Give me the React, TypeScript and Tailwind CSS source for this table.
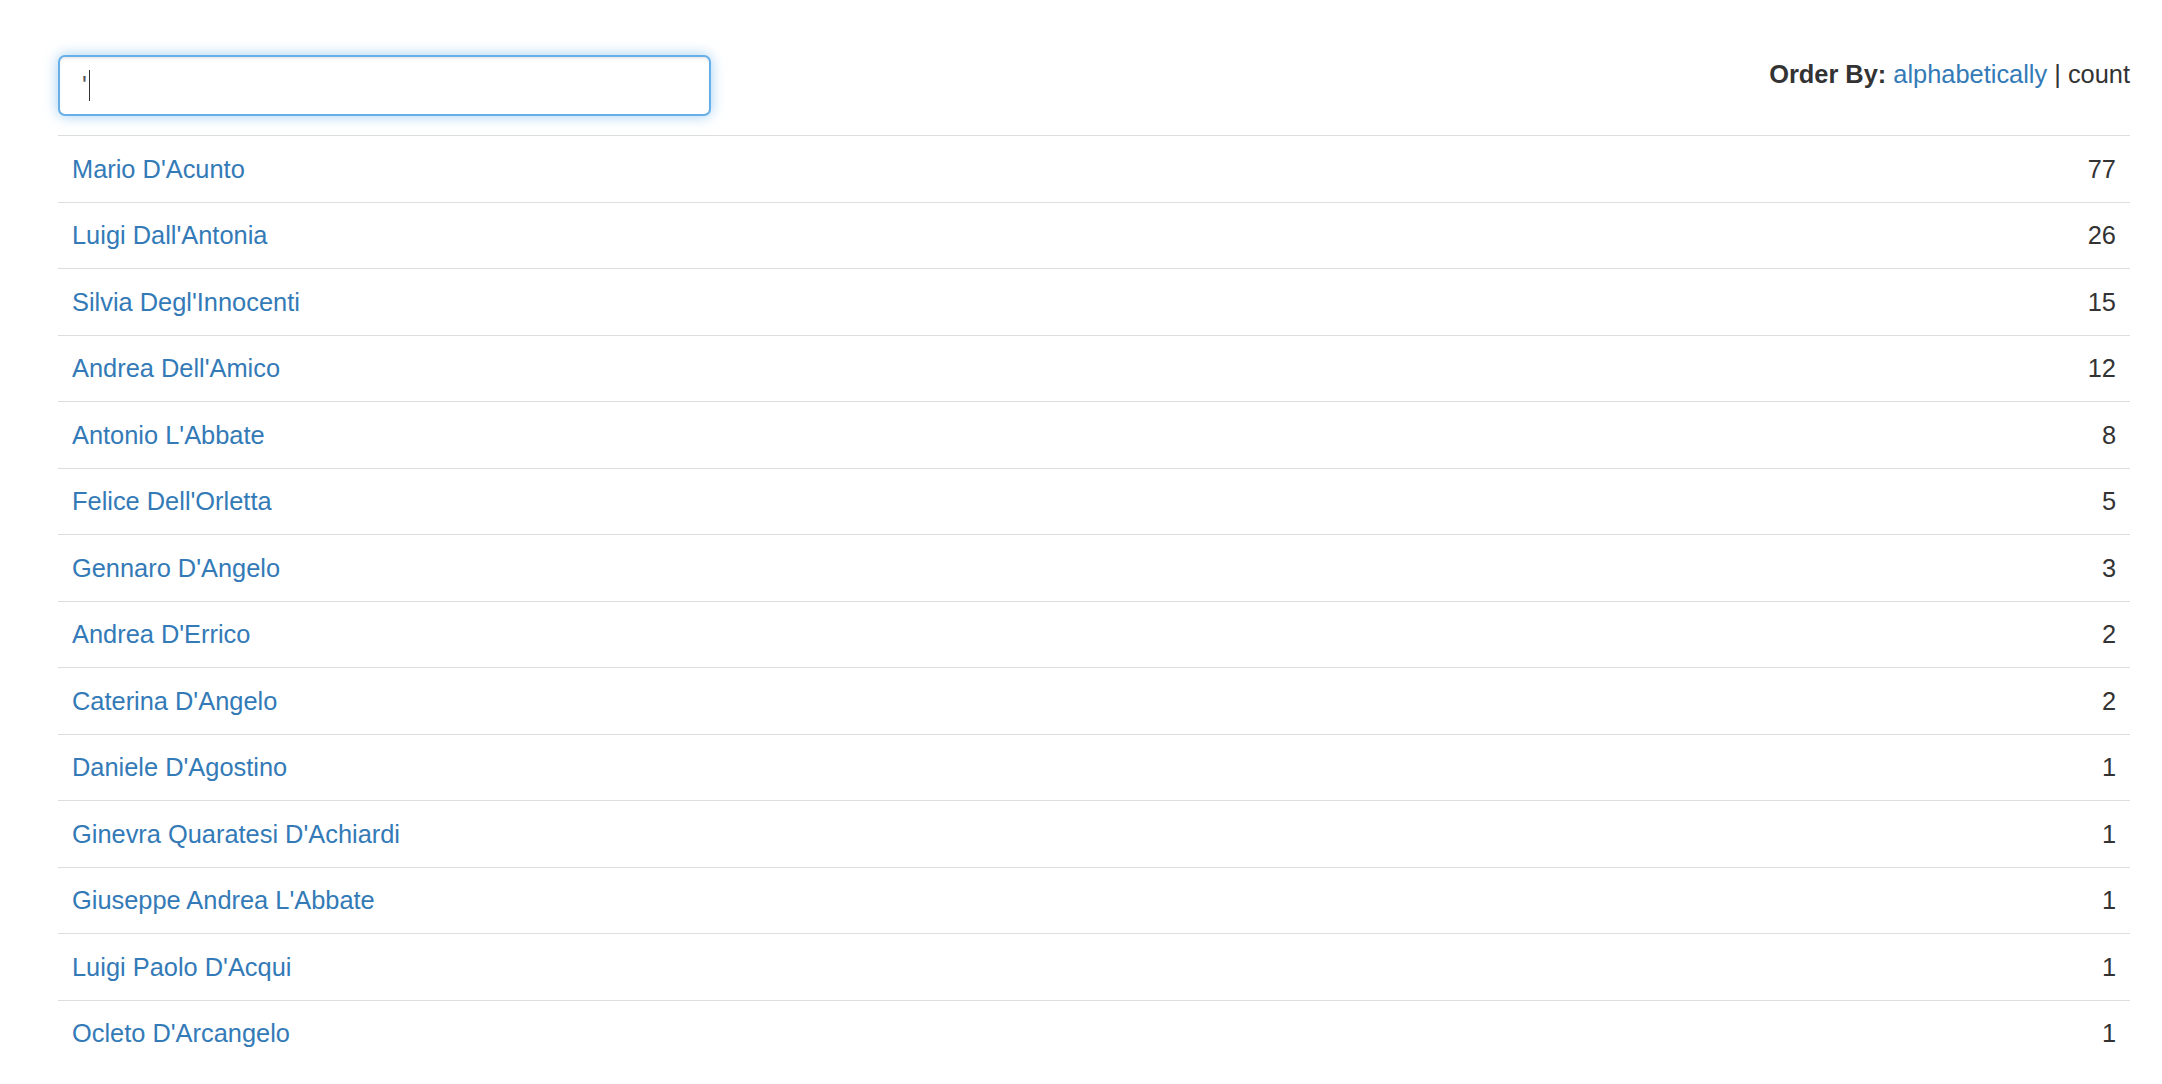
const rows: [string, number][] = [
  ["Mario D'Acunto", 77],
  ["Luigi Dall'Antonia", 26],
  ["Silvia Degl'Innocenti", 15],
  ["Andrea Dell'Amico", 12],
  ["Antonio L'Abbate", 8],
  ["Felice Dell'Orletta", 5],
  ["Gennaro D'Angelo", 3],
  ["Andrea D'Errico", 2],
  ["Caterina D'Angelo", 2],
  ["Daniele D'Agostino", 1],
  ["Ginevra Quaratesi D'Achiardi", 1],
  ["Giuseppe Andrea L'Abbate", 1],
  ["Luigi Paolo D'Acqui", 1],
  ["Ocleto D'Arcangelo", 1],
];

export default function App() {
  return (
    <div className="min-h-screen bg-white pl-[58px] pr-[32px] pt-[55px] text-[25.4px] text-[#333] font-['Liberation_Sans',Arial,sans-serif]">
      <div className="flex items-start justify-between">
        <div className="flex h-[61px] w-[653px] items-center rounded-[7px] border-2 border-[#66afe9] bg-white pl-[22px] shadow-[inset_0_2px_2px_rgba(0,0,0,0.075),0_0_14px_rgba(102,175,233,0.6)]">
          <span className="text-[#555] leading-none">'</span>
          <span className="ml-[2px] h-[31px] w-[1.5px] bg-[#333]" />
        </div>
        <div className="mt-[1px] leading-[36px]">
          <span className="font-bold">Order By:</span>{" "}
          <a className="text-[#337ab7]">alphabetically</a> | count
        </div>
      </div>
      <div className="mt-[19px]">
        {rows.map(([name, count]) => (
          <div
            key={name}
            className="flex justify-between border-t border-[#ddd] px-[14px] py-[14.75px] leading-[36px]"
          >
            <a className="text-[#337ab7]">{name}</a>
            <span>{count}</span>
          </div>
        ))}
      </div>
    </div>
  );
}
